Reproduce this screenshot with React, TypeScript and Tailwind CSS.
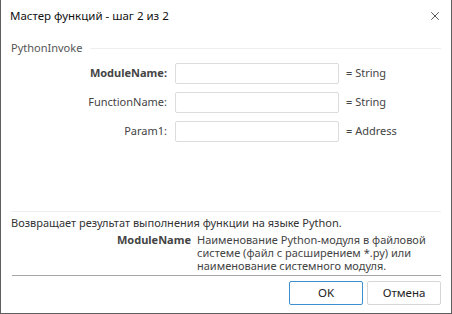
import { X } from 'lucide-react'

const params = [
  { name: 'ModuleName:', type: '= String', bold: true },
  { name: 'FunctionName:', type: '= String', bold: false },
  { name: 'Param1:', type: '= Address', bold: false },
]

export default function App() {
  return (
    <div
      className="w-[452px] h-[314px] bg-white border-x border-b border-[#5f5f5f] flex flex-col text-[11px] text-[#222]"
      style={{ fontFamily: '"Noto Sans", "Open Sans", sans-serif' }}
    >
      {/* Title */}
      <div className="h-[31px] flex items-center justify-between pl-[9px] pr-[9px] shrink-0">
        <span className="text-[11.5px] text-[#111]">Мастер функций - шаг 2 из 2</span>
        <X className="w-[14px] h-[14px] text-[#222]" strokeWidth={1.3} />
      </div>

      {/* Group */}
      <div className="px-[10px] pt-[8px]">
        <div className="flex items-center h-[18px]">
          <span className="text-[#555]">PythonInvoke</span>
          <div className="flex-1 h-px bg-[#eeeeee] ml-[8px]" />
        </div>

        <div className="mt-[6px] flex flex-col gap-[8px]">
          {params.map((p) => (
            <div key={p.name} className="flex items-center h-[21px]">
              <span
                className={
                  'w-[156px] text-right text-[#444] ' + (p.bold ? 'font-bold' : '')
                }
              >
                {p.name}
              </span>
              <div className="ml-[8px] w-[164px] h-[21px] border border-[#dcdcdc] rounded-[2px] bg-white" />
              <span className="ml-[7px] text-[#444]">{p.type}</span>
            </div>
          ))}
        </div>
      </div>

      <div className="flex-1" />

      {/* Description */}
      <div className="px-[10px]">
        <div className="h-px bg-[#eeeeee]" />
        <div className="mt-[4px] text-[#333] leading-[14px]">
          Возвращает результат выполнения функции на языке Python.
        </div>
        <div className="mt-[3px] flex leading-[13px]">
          <span className="w-[180px] text-right font-bold text-[#444] shrink-0">ModuleName</span>
          <span className="ml-[6px] whitespace-nowrap text-[#444]">
            Наименование Python-модуля в файловой
            <br />
            системе (файл с расширением *.py) или
            <br />
            наименование системного модуля.
          </span>
        </div>
        <div className="mt-[3px] h-px bg-[#a6a6a6] ml-[1px]" />
      </div>

      {/* Buttons */}
      <div className="flex justify-end gap-[4px] pr-[10px] pt-[5px] pb-[8px]">
        <button className="w-[74px] h-[24px] border border-[#3d8fcf] rounded-[2px] bg-white text-[#222] text-[11.5px]">
          OK
        </button>
        <button className="w-[74px] h-[24px] border border-[#d6d6d6] rounded-[2px] bg-white text-[#222] text-[11.5px]">
          Отмена
        </button>
      </div>
    </div>
  )
}
